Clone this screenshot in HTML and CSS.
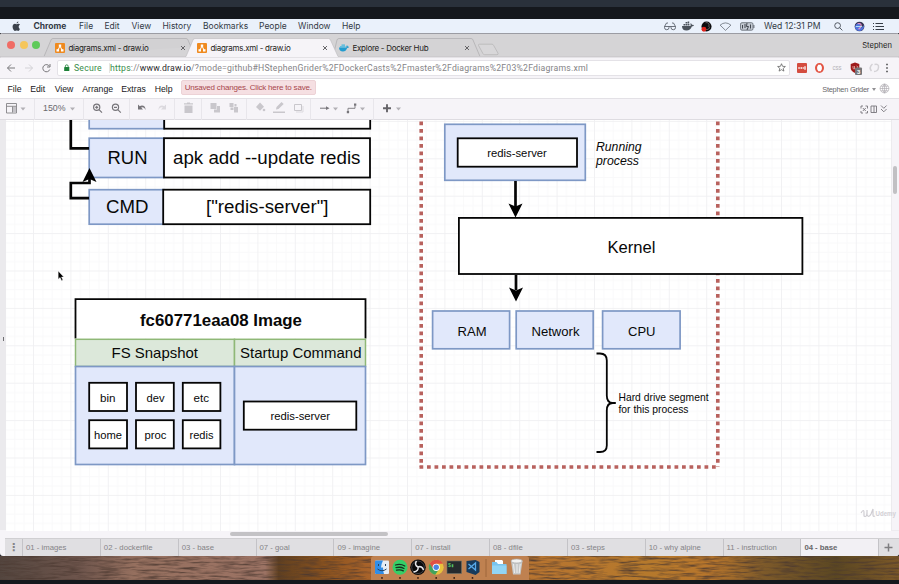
FILE: index.html
```html
<!DOCTYPE html>
<html lang="en">
<head>
<meta charset="utf-8">
<title>diagrams.xml - draw.io</title>
<link rel="stylesheet" href="styles.css">
</head>
<body>
<div class="screen">
  <div class="bezel"></div>
  <header class="menubar">
    <svg class="apple" viewBox="0 0 14 14"><path d="M9.4.6C9.5 1.900 8.400 3.100 7.100 3.100 7 1.900 8.100.8 9.400.6ZM11.300 10.200C10.700 11.600 10 12.700 9.100 12.700 8.300 12.700 8 12.200 7 12.200 6.100 12.200 5.700 12.700 5 12.700 3.700 12.700 2 9.800 2 7.300 2 5 3.500 3.600 5 3.600 5.900 3.600 6.500 4.100 7.200 4.100 7.900 4.100 8.600 3.500 9.700 3.600 10.400 3.600 11 4 11.400 4.600 9.200 5.900 9.300 9.200 11.300 10.200Z"/></svg>
    <nav class="mac-menu"><b>Chrome</b><span>File</span><span>Edit</span><span>View</span><span>History</span><span>Bookmarks</span><span>People</span><span>Window</span><span>Help</span></nav>
    <div class="status">
      <svg class="s-glasses" viewBox="0 0 12 10"><path d="M.5 5.500h4.500v1a2.200 2.200 0 0 1-4.500 0ZM7 5.500h4.500v1a2.200 2.200 0 0 1-4.500 0ZM5 5.500h2M.5 5.500 2.500 2h1.500M11.500 5.500 9.500 2H8" fill="none" stroke="#4b525c" stroke-width=".8"/></svg>
      <svg class="s-docker" viewBox="0 0 12 10"><path d="M0 5h8.500c.3-.8.2-1.500-.2-2.200L9 2.200l1 1.600 2 .2-.6 1-1.600.4C9 8 7 9.500 4.500 9.500 1.500 9.500 0 8 0 5ZM1.500 3h1.700v1.500H1.500ZM3.600 3h1.700v1.500H3.600ZM5.700 3h1.700v1.500H5.700ZM3.600 1h1.700v1.500H3.600ZM5.700.5h1.500v2H5.700Z" fill="#4a515a"/></svg>
      <svg class="s-obs" viewBox="0 0 12 12"><circle cx="6" cy="6" r="5.500" fill="#0c0c0e"/><path d="M5 2C8 1 10 4 8 6M9 6c1 3-3 4.500-5 2" fill="none" stroke="#999" stroke-width=".7"/><circle cx="3.200" cy="9" r="2.600" fill="#e0261e"/></svg>
      <svg class="s-wifi" viewBox="0 0 14 10"><path d="M1 3.500Q7-1.500 13 3.500L7 9.300Z" fill="none" stroke="#5b626b" stroke-width=".8"/></svg>
      <svg class="s-battery" viewBox="0 0 15 9"><rect x=".5" y=".7" width="12.500" height="7.500" rx="1.500" fill="#c3c9d2" stroke="#5c636c" stroke-width=".8"/><path d="M13.900 3v3" stroke="#5c636c"/><path d="M2.500 3v3.500M4 3h2M4 5h2M7 1 6.500 4.500h2L7 8M10.500 2.500v4" stroke="#40464e" fill="none"/></svg>
      <time>Wed 12:31 PM</time>
      <svg class="s-search" viewBox="0 0 10 10"><circle cx="4" cy="4" r="3.200" fill="none" stroke="#444b55"/><path d="m6.300 6.300 3 3" stroke="#444b55"/></svg>
      <svg class="s-siri" viewBox="0 0 12 12"><circle cx="6" cy="6" r="5.300" fill="#353352"/><path d="M1 6C3 1 7 2 7 5s3 2 4-1c.5 5-3 7-5 7C3 11 1 9 1 6Z" fill="#5274dc"/><path d="M4 3c3-1 5 1 3 4L5 9" fill="none" stroke="#e794ca" stroke-width="1.300"/><path d="M2 6h7" stroke="#b7e9f9"/></svg>
      <svg class="s-list" viewBox="0 0 13 9"><path d="M1 1.500h1M1 4.500h1M1 7.500h1M3.500 1.500H11M3.500 4.500H12M3.500 7.500H12" stroke="#353c45" stroke-width="1"/></svg>
    </div>
  </header>

  <div class="browser">
    <div class="tabstrip">
      <div class="lights"><i class="red"></i><i class="amber"></i><i class="green"></i></div>
      <svg class="tab-shapes" viewBox="0 0 899 24"><path d="M44 22.500 51 6q.5-1.500 2-1.500H186q1.500 0 2 1.500l3 7" fill="#d2d1d3" stroke="#b1b0b2" stroke-width=".8"/><path d="M333 22.500 337 6q.5-1.500 2-1.500H471q1.500 0 2 1.500l7 16.500" fill="#d4d3d5" stroke="#b1b0b2" stroke-width=".8"/><path d="M0 22.500H186L193 6q.5-1.500 2-1.500H328.500q1.500 0 2 1.500l7.500 16.500H899V24H0Z" fill="#f6f4f8" stroke="#bcbbbe" stroke-width=".6"/><path d="M479.500 10.200H492q1 0 1.500 1l4.500 8q.5 1.500-1 1.500H484.500q-1 0-1.500-1l-4.500-8.300q-.3-1.200 1-1.200Z" fill="#d8d7d9" stroke="#b7b6b8" stroke-width=".8"/></svg>
      <div class="tab t1"><svg class="fav" viewBox="0 0 10 10"><rect width="10" height="10" rx="1" fill="#ef8a1f"/><path d="M5 3 3 7M5 3l2 4" stroke="#fff"/><path d="M3.800 1.500h2.400v2.200H3.800ZM1.500 6.200h2.500v2.200H1.500ZM6 6.200h2.500v2.200H6Z" fill="#fff"/></svg><span>diagrams.xml - draw.io</span><svg class="x" viewBox="0 0 6 6"><path d="m1 1 4 4m0-4L1 5"/></svg></div>
      <div class="tab t2"><svg class="fav" viewBox="0 0 10 10"><rect width="10" height="10" rx="1" fill="#ef8a1f"/><path d="M5 3 3 7M5 3l2 4" stroke="#fff"/><path d="M3.800 1.500h2.400v2.200H3.800ZM1.500 6.200h2.500v2.200H1.500ZM6 6.200h2.500v2.200H6Z" fill="#fff"/></svg><span>diagrams.xml - draw.io</span><svg class="x" viewBox="0 0 6 6"><path d="m1 1 4 4m0-4L1 5"/></svg></div>
      <div class="tab t3"><svg class="fav" viewBox="0 0 10 10"><path d="M0 4.500h7.500L7.300 3l.8-.8.8 1.300 1.100.2-.5 1-1.300.3C7.300 7.500 6 8.500 4 8.500 1.500 8.500 0 7 0 4.500Z" fill="#239ccf"/><path d="M1 3.800h5.500M2.500 2.200H6" stroke="#43b8df" stroke-width="1.300"/></svg><span>Explore - Docker Hub</span><svg class="x" viewBox="0 0 6 6"><path d="m1 1 4 4m0-4L1 5"/></svg></div>
      <span class="profile">Stephen</span>
    </div>

    <div class="addressbar">
      <svg class="nav-icons" viewBox="0 0 52 14"><path d="M9 7H1.500M5 3.500 1.500 7 5 10.500" fill="none" stroke="#79787b" stroke-width="1"/><path d="M19 7h7.500M23 3.500 26.500 7 23 10.500" fill="none" stroke="#d3d2d6" stroke-width="1"/><path d="M43.500 5.300A3.600 3.600 0 1 0 43.800 8.500M44 3v3h-3" fill="none" stroke="#79787b" stroke-width="1"/></svg>
      <div class="omnibox">
        <svg class="lock" viewBox="0 0 6 8"><path d="M1.500 3.500V2.300a1.500 1.500 0 0 1 3 0v1.200" fill="none" stroke="#1d8138" stroke-width=".9"/><rect x=".2" y="3.200" width="5.600" height="4.600" rx=".4" fill="#1d8138"/></svg>
        <span class="secure">Secure</span><span class="url"><span class="scheme">https</span>://<span class="host">www.draw.io</span>/?mode=github#HStephenGrider%2FDockerCasts%2Fmaster%2Fdiagrams%2F03%2Fdiagrams.xml</span>
        <svg class="star" viewBox="0 0 10 10"><path d="m5 .8 1.200 2.900 3.100.2L6.900 6l.8 3L5 7.400 2.300 9l.8-3L.7 3.900l3.100-.2Z" fill="none" stroke="#555" stroke-width=".8"/></svg>
      </div>
      <svg class="extensions" viewBox="0 0 100 16"><rect x="2" y="3" width="10" height="10" rx="1" fill="#d44c3f"/><path d="M3.300 8h1.500M5.500 8H7M7.600 8h1.200M10 6.300v3.400" stroke="#fff" stroke-width="1.300"/><ellipse cx="24.500" cy="8" rx="3.500" ry="3.900" fill="none" stroke="#e35342" stroke-width="2"/><path d="M24.500 4.800v6.400" stroke="#fff" stroke-width="2.800"/><text x="37.500" y="10.200" textLength="9" lengthAdjust="spacingAndGlyphs">css</text><path d="m60 2.500 4.300 1.400v4.200q0 3.200-4.300 5-4.300-1.800-4.300-5V3.900Z" fill="#9e1b1b"/><path d="M58 6v2q0 1.200 1.500 1V6M61.500 6q2 0 1 2.500" stroke="#e8b0a9" fill="none" stroke-width=".8"/><rect x="60" y="7.500" width="7" height="7.500" rx="1" fill="#767577"/><text class="count" x="61.900" y="13.500">3</text><path d="M76.500 11q-3-3.500 1-7M79 11.500q4 0 4.500-4t-4-3" fill="none" stroke="#d4d2d6" stroke-width="1.500"/><path d="M91.200 4.500h1.600M91.200 8h1.600M91.200 11.500h1.600" stroke="#4c4b4d" stroke-width="1.600"/></svg>
    </div>

    <div class="appmenu">
      <nav><span>File</span><span>Edit</span><span>View</span><span>Arrange</span><span>Extras</span><span>Help</span></nav>
      <div class="unsaved">Unsaved changes. Click here to save.</div>
      <span class="user">Stephen Grider</span><i class="caret"></i>
      <svg class="globe" viewBox="0 0 12 12"><circle cx="6" cy="6" r="4.800"/><path d="M1 6h10M2 3.500h8M2 8.500h8M6 1v10M6 1Q1.500 6 6 11M6 1q4.500 5 0 10"/></svg>
    </div>

    <div class="toolbar">
      <svg viewBox="0 0 899 21">
        <path d="M34.500 0v21M83.500 0v21M129.500 0v21M174.500 0v21M201.500 0v21M246.500 0v21M310.500 0v21M373.500 0v21" stroke="#e8e6eb"/>
        <g fill="none" stroke="#858387" stroke-width=".9"><path d="M6.500 4.500h10v9.500h-10ZM6.500 7.300h10M12.500 7.500v6"/><path d="M13 10.700h3" stroke-width="5.500" stroke="#c5c3c8"/></g>
        <g fill="#b2b0b5"><path d="M20.500 8.500h5l-2.500 3ZM70 8.500h5l-2.500 3ZM333 8.500h5l-2.500 3ZM360 8.500h5l-2.500 3ZM396 8.500h5l-2.500 3Z"/></g>
        <text x="43" y="12.300" textLength="22.500" lengthAdjust="spacingAndGlyphs">150%</text>
        <g fill="none" stroke="#77757a" stroke-width="1.200"><circle cx="96.700" cy="8.300" r="3.100"/><path d="m99 10.600 3 3M95.200 8.300h3M96.700 6.800v3"/><circle cx="115.500" cy="8.300" r="3.100"/><path d="m117.800 10.600 3 3M114 8.300h3"/></g>
        <path d="M138 5.500v5h5l-1.900-1.900q3-1.500 4.500 2.300Q145.300 6.500 142 6.500q-1.300 0-2.200.8Z" fill="#77757a"/>
        <path d="M166 5.500v5h-5l1.900-1.900q-3-1.500-4.500 2.300Q158.700 6.500 162 6.500q1.300 0 2.200.8Z" fill="#dbd9de"/>
        <g fill="#c9c7cc"><path d="M184.500 6.500h8v7.500h-8ZM184 4.300h9v1.300h-9ZM187 3.500h3v1h-3Z"/><path d="M210.500 4h6v6h-6ZM217 7h3v6.500h-6v-3h3ZM229.500 4h4v4h-4ZM234 8h4v5.500h-4ZM230.500 8.500h3v2.500h-3ZM234.500 5h2v2.500h-2Z"/><path d="m256 8 4-4.500 4 4.300-4 4Z"/><circle cx="264" cy="11" r="1.300"/><path d="m276 10.500.5-2.500 5-5 2.200 2-5.200 5ZM273 12.600h12v1.300h-12Z"/></g>
        <path d="M294.500 5.500h7v6h-7Z" fill="none" stroke="#c9c7cc"/><path d="M296 13h7V7" fill="none" stroke="#dcdadf"/>
        <path d="M320 9.200h7" stroke="#77757a"/><path d="m326 7.300 3.500 1.900-3.500 1.900Z" fill="#77757a"/>
        <path d="M348 13V9.300h7V6.500" fill="none" stroke="#858388"/><path d="M346.800 12h2.300v2.300h-2.300ZM354 4.500h2.300v2.300H354Z" fill="#77757a"/>
        <path d="M383 9.200h8M387 5.200v8" stroke="#656368" stroke-width="1.900"/>
        <g fill="none" stroke="#77757a" stroke-width=".9"><path d="M861 9.500V7h2M865.500 7h2v2.500M867.500 12v2h-2M863 14h-2v-2M862.800 9l3 3M865.800 9l-3 3M871 7h5.500v6.500H871ZM874 7v6.500M881 6.500l2.800 2.800 2.800-2.800M881 10l2.800 2.800 2.800-2.800"/></g>
      </svg>
    </div>

    <main class="workspace">
      <aside class="panel-edge"><i></i></aside>
      <svg class="canvas" viewBox="6 120 885 411">
        <defs>
          <pattern id="grid" x="-4.400" y="120.900" width="37.400" height="37.400" patternUnits="userSpaceOnUse"><path d="M9.850 0v37.400M19.200 0v37.400M28.550 0v37.400M0 9.850h37.400M0 19.200h37.400M0 28.550h37.400" stroke="#f8f8f9" stroke-width=".9"/><path d="M.5 0v37.400M0 .5h37.400" stroke="#f0f0f2" stroke-width=".9"/></pattern>
        </defs>
        <rect class="sheet" x="6" y="120" width="885" height="411"/><rect x="6" y="120" width="885" height="411" fill="url(#grid)"/>
        <g class="boundary"><path d="M421.200 121.500V467M717.800 121.500V467"/><path d="M419.500 467H719.500"/></g>
        <g class="blue">
          <rect x="89.200" y="100" width="75" height="28.700"/><rect x="89.200" y="138.200" width="74.500" height="39.300"/><rect x="89.200" y="189.700" width="74.500" height="34.500"/>
          <rect x="444.800" y="124.300" width="140.500" height="56"/>
          <rect x="432.600" y="311" width="77" height="37.800"/><rect x="516.200" y="311" width="77" height="37.800"/><rect x="602.600" y="311" width="77.500" height="37.800"/>
        </g>
        <g class="black">
          <rect x="164.200" y="100" width="206" height="28.700"/><rect x="164" y="138.200" width="206" height="39.300"/><rect x="163.200" y="189.700" width="207" height="34.500"/>
          <rect x="457.700" y="138.300" width="119.300" height="28.400"/><rect x="458.900" y="217.900" width="343.500" height="56.100"/>
        </g>
        <path class="header-box" d="M75.500 338.600V299.200h290v39.400"/>
        <g class="green"><rect x="75.500" y="339.300" width="159" height="27.200"/><rect x="234.500" y="339.300" width="131" height="27.200"/></g>
        <g class="blue"><rect x="75.500" y="366.500" width="159" height="98"/><rect x="234.500" y="366.500" width="131" height="98"/></g>
        <g class="black">
          <rect x="89.200" y="382.800" width="37.800" height="28.200"/><rect x="136" y="382.800" width="37.800" height="28.200"/><rect x="182.800" y="382.800" width="37.600" height="28.200"/>
          <rect x="89.200" y="420.200" width="37.800" height="28.200"/><rect x="136" y="420.200" width="37.800" height="28.200"/><rect x="182.800" y="420.200" width="37.600" height="28.200"/>
          <rect x="243.800" y="401.500" width="112.500" height="28.200"/>
        </g>
        <g class="wire"><path d="M70.800 118v30.400H89"/><path d="M89 198.100H70.800V183H89.500V178"/><path d="M515.500 181v26"/><path d="M516 275v15"/></g>
        <path d="m89.500 168 7 14-7-3-7 3ZM515.500 217.500l-7-14 7 3 7-3ZM516 301.500l-7-14 7 3 7-3Z"/>
        <path class="brace" d="M596.500 353.500h3.500q6.800 0 6.800 7v35q0 7.500 6 7.500h3h-3q-6 0-6 7.500v35q0 6.500-6.800 6.500h-3.500"/>
        <g class="labels">
          <text class="xl" x="107.500" y="164.300" textLength="40" lengthAdjust="spacingAndGlyphs">RUN</text>
          <text class="xl" x="173" y="164.300" textLength="187.500" lengthAdjust="spacingAndGlyphs">apk add --update redis</text>
          <text class="xl" x="106" y="213.300" textLength="42.500" lengthAdjust="spacingAndGlyphs">CMD</text>
          <text class="xl" x="206" y="213.300" textLength="122.500" lengthAdjust="spacingAndGlyphs">["redis-server"]</text>
          <text class="title" x="140" y="326.300" textLength="162" lengthAdjust="spacingAndGlyphs">fc60771eaa08 Image</text>
          <text class="lg" x="111.500" y="358.200" textLength="86.500" lengthAdjust="spacingAndGlyphs">FS Snapshot</text>
          <text class="lg" x="240" y="358.200" textLength="121.500" lengthAdjust="spacingAndGlyphs">Startup Command</text>
          <text x="100" y="401.600" textLength="15.500" lengthAdjust="spacingAndGlyphs">bin</text><text x="146.500" y="401.600" textLength="18" lengthAdjust="spacingAndGlyphs">dev</text><text x="193.500" y="401.600" textLength="15.500" lengthAdjust="spacingAndGlyphs">etc</text>
          <text x="94" y="439" textLength="28" lengthAdjust="spacingAndGlyphs">home</text><text x="144.500" y="439" textLength="22" lengthAdjust="spacingAndGlyphs">proc</text><text x="189.500" y="439" textLength="24" lengthAdjust="spacingAndGlyphs">redis</text>
          <text x="270.500" y="420.300" textLength="59.500" lengthAdjust="spacingAndGlyphs">redis-server</text>
          <text x="487.300" y="157" textLength="59.500" lengthAdjust="spacingAndGlyphs">redis-server</text>
          <text class="it" x="596" y="150.700" textLength="45.500" lengthAdjust="spacingAndGlyphs">Running</text><text class="it" x="596" y="164.700" textLength="43" lengthAdjust="spacingAndGlyphs">process</text>
          <text class="kernel" x="607.500" y="252.500" textLength="48" lengthAdjust="spacingAndGlyphs">Kernel</text>
          <text class="md" x="457.500" y="335.500" textLength="29" lengthAdjust="spacingAndGlyphs">RAM</text><text class="md" x="531.500" y="335.500" textLength="48" lengthAdjust="spacingAndGlyphs">Network</text><text class="md" x="628" y="335.500" textLength="27.500" lengthAdjust="spacingAndGlyphs">CPU</text>
          <text class="sm" x="618.500" y="401.300" textLength="90" lengthAdjust="spacingAndGlyphs">Hard drive segment</text><text class="sm" x="618.500" y="413.200" textLength="70" lengthAdjust="spacingAndGlyphs">for this process</text>
        </g>
        <path d="M58.200 271v8.200l1.900-1.700 1.500 3.200 1.300-.6-1.400-3.100h2.300Z" stroke="#fff" stroke-width=".4"/>
      </svg>
      <div class="vscroll"><i></i></div>
      <svg class="watermark" viewBox="0 0 38 14"><path d="M1 6q3-5 3 0v3q3 2 3-4V3M7 5v3q2 3 4-1l2-5v6q0 2 2 1"/><text x="15.500" y="9.300" textLength="20.500" lengthAdjust="spacingAndGlyphs">Udemy</text></svg>
    </main>
    <div class="hscroll"><i></i></div>
    <footer class="pages"><span class="dots">⋮</span><span>01 - images</span><span>02 - dockerfile</span><span>03 - base</span><span>07 - goal</span><span>09 - imagine</span><span>07 - install</span><span>08 - dfile</span><span>03 - steps</span><span>10 - why alpine</span><span>11 - instruction</span><span class="active">04 - base</span><svg class="add" viewBox="0 0 18 18"><path d="M5.500 8.500h8M9.500 4.500v8" stroke="#7e7d80" stroke-width="1.500"/></svg></footer>
  </div>

  <div class="desktop">
    <svg class="ripples" viewBox="0 0 899 24" preserveAspectRatio="none"><defs><filter id="water" x="0" y="0" width="100%" height="100%"><feTurbulence type="fractalNoise" baseFrequency=".05 .5" numOctaves="3" seed="8"/><feColorMatrix values="0 0 0 0 .07  0 0 0 0 .04  0 0 0 0 .03  2.200 0 0 0 -.9"/></filter></defs><rect width="899" height="24" filter="url(#water)"/></svg>
    <div class="dock">
      <svg viewBox="0 0 158 24">
        <rect x="4" y="4.500" width="14" height="13.500" rx="1" fill="#e5edf5"/><path d="M5 4.500h7q-2 4-2 7h2q0 4 1 6.500H5q-1 0-1-1v-11.500q0-1 1-1Z" fill="#2f8ee8"/><path d="M7.500 8v2M14.500 8v2M6.500 13q4.500 3.500 9 0" fill="none" stroke="#24415f"/>
        <circle cx="29" cy="11.300" r="7.500" fill="#35cf67"/><path d="M24.500 9q5-1.500 9.300 1M25 11.700q4.500-1.200 8 .8M25.500 14.200q4-1 6.800.7" fill="none" stroke="#17301e" stroke-width="1.300" stroke-linecap="round"/>
        <circle cx="47" cy="11.300" r="7.800" fill="#09090b"/><circle cx="47" cy="11.300" r="6.300" fill="none" stroke="#77777b" stroke-width=".5"/><path d="M47 11q-4-2-1.500-6M47 11q4-1.500 5.500 3M47 11q1 4-4.500 5" fill="none" stroke="#e5e5e8" stroke-width="1.500"/>
        <circle cx="65.200" cy="11.300" r="7.500" fill="#e7c23c"/><path d="M58.700 7.500a7.500 7.500 0 0 1 13.200.3H65.200L61.700 13Z" fill="#df5043"/><path d="M58.700 7.500a7.500 7.500 0 0 0 5.500 11.200L68.200 13 62.200 13Z" fill="#42a35b"/><circle cx="65.200" cy="11.300" r="3.600" fill="#fff"/><circle cx="65.200" cy="11.300" r="2.700" fill="#4c83df"/>
        <rect x="76" y="5" width="14.500" height="12.500" fill="#252a2e" stroke="#687069" stroke-width=".6"/><text x="77" y="11">$▮</text>
        <path d="m95.500 5 9-1 4 2v10l-4 3-9-3Z" fill="#173a5b"/><path d="m97.500 8 7 6V7l-7 6" fill="none" stroke="#58a9e9" stroke-width="1.300"/>
        <path d="M115 3v18" stroke="#985f35" stroke-width=".8"/>
        <path d="M124 4h7l1 1v4h-8Z" fill="#fff"/><path d="M121 6h4.500l1.500 2H135.500v10H121Z" fill="#78c4ed"/><path d="M121 9.500h14.500V18H121Z" fill="#92d5f4"/>
        <path d="m140 5 2 13.500h7.500l2-13.500Z" fill="#c6c8c8"/><ellipse cx="145.700" cy="5" rx="5.700" ry="2" fill="#f2f2f1" stroke="#aaa" stroke-width=".7"/><path d="m142.500 8 1 9M146 8v9M149.200 8l-1 9" stroke="#eee"/>
        <g fill="#30190f"><circle cx="11" cy="21.900" r=".9"/><circle cx="29" cy="21.900" r=".9"/><circle cx="47" cy="21.900" r=".9"/><circle cx="65.200" cy="21.900" r=".9"/><circle cx="83.200" cy="21.900" r=".9"/><circle cx="101.500" cy="21.900" r=".9"/></g>
      </svg>
    </div>
  </div>
  <div class="bottom-bezel"></div>
</div>
</body>
</html>
```
FILE: styles.css
```css
* { box-sizing: border-box; }
body { margin: 0; background: #15181d; font-family: "Liberation Sans", Arial, sans-serif; overflow: hidden; }
svg { display: block; flex: none; }
.screen { width: 899px; height: 584px; display: flex; flex-direction: column; }
.bezel { height: 19px; flex: none; background: linear-gradient(#2a313b 7px, #15181d 7px); }

.menubar { height: 14px; flex: none; display: flex; align-items: center; background: #eaf1fb; color: #333a45; font: 8.5px/14px Inter, sans-serif; }
.apple { width: 11px; height: 11px; margin-left: 11px; fill: #3b414b; }
.mac-menu { display: grid; grid-template-columns: 45.500px 25.500px 27px 31px 40.500px 56px 39px 44px 30px; margin-left: 11.500px; white-space: nowrap; }
.mac-menu b { font-weight: 700; }
.status { flex: 1; display: flex; align-items: center; justify-content: flex-end; padding-right: 14px; }
.s-glasses { width: 12px; height: 10px; margin-right: 6px; }
.s-docker { width: 12px; height: 10px; margin-right: 7px; }
.s-obs { width: 11px; height: 11px; margin-right: 7px; }
.s-wifi { width: 13px; height: 9px; margin-right: 8px; }
.s-battery { width: 15px; height: 9px; margin-right: 9px; }
.status time { width: 57px; margin-right: 13px; white-space: nowrap; font-size: 8.600px; }
.s-search { width: 9px; height: 9px; margin-right: 11px; }
.s-siri { width: 11px; height: 11px; margin-right: 7px; }
.s-list { width: 13px; height: 9px; }

.browser { height: 523px; flex: none; display: flex; flex-direction: column; background: #f6f4f8; border-radius: 3px; overflow: hidden; }
.tabstrip { position: relative; height: 24px; flex: none; display: flex; align-items: center; background: #d5d4d6; border-top: 1px solid #9b9ca3; font: 8px/12px Inter, sans-serif; color: #1e1d20; padding: 0 7px; }
.tab-shapes { position: absolute; left: 0; top: 0; width: 899px; height: 24px; }
.lights { display: flex; gap: 4.500px; width: 47.500px; margin-top: -1px; }
.lights i { width: 8px; height: 8px; border-radius: 50%; }
.red { background: #f06c65; } .amber { background: #f5c65c; } .green { background: #5fca5a; }
.tab { position: relative; display: flex; align-items: center; width: 142px; padding-top: 4px; }
.fav { width: 10px; height: 10px; margin-right: 4px; }
.tab span { flex: 1; white-space: nowrap; letter-spacing: -.28px; font-size: 8px; }
.x { width: 6px; height: 6px; margin-right: 11px; stroke: #58575a; stroke-width: .9; }
.profile { position: relative; margin-left: auto; font-size: 7.600px; }

.addressbar { height: 22px; flex: none; display: flex; align-items: center; border-bottom: 1px solid #dddce0; }
.nav-icons { width: 52px; height: 14px; margin-left: 6px; }
.omnibox { width: 733px; height: 16px; border: 1px solid #e4e2e7; border-radius: 2px; background: #fff; display: flex; align-items: center; margin-left: -1px; padding: 0 3px 0 6px; font: 8.7px/14px Roboto, sans-serif; letter-spacing: .2px; color: #858487; white-space: nowrap; }
.lock { width: 5.500px; height: 7.500px; margin-right: 4.500px; }
.secure { color: #3a8d4b; width: 36px; border-right: 1px solid #e5e5e5; line-height: 10px; }
.url { flex: 1; }
.scheme { color: #3a8d4b; } .host { color: #29282b; }
.star { width: 9px; height: 9px; }
.extensions { width: 100px; height: 16px; margin-left: 5px; }
.extensions text { font: 6.5px "Liberation Sans", sans-serif; fill: #b5b3b8; }
.extensions .count { fill: #fff; font-size: 6px; font-weight: bold; }

.appmenu { height: 19px; flex: none; background: #fff; display: flex; align-items: center; padding-right: 9px; color: #18171a; font-size: 8.700px; }
.appmenu nav { display: grid; grid-template-columns: 22.700px 24.500px 27.500px 39px 33.500px 26px; padding-left: 7.500px; white-space: nowrap; }
.unsaved { width: 135px; height: 15px; margin-top: -2px; background: #f5dfe2; border: 1px solid #ecd2d6; border-radius: 2px; color: #a8464c; font: 8px/13px "Liberation Sans", sans-serif; letter-spacing: -.2px; text-align: center; white-space: nowrap; }
.user { margin-left: auto; color: #69686b; font-size: 7.400px; letter-spacing: -.24px; padding-top: 2px; }
.caret { border: 2.500px solid transparent; border-top: 3px solid #929194; border-bottom: 0; margin: 1px 3px 0 3px; }
.globe { width: 11px; height: 11px; fill: none; stroke: #aaa8ad; stroke-width: .7; }
.toolbar { height: 22px; flex: none; border-top: 1px solid #e3e1e6; border-bottom: 1px solid #dedce1; background: #f6f4f8; }
.toolbar svg { width: 899px; height: 21px; }
.toolbar text { font: 8.500px "Liberation Sans", sans-serif; fill: #6b696e; }

.workspace { position: relative; height: 410px; flex: none; display: flex; }
.panel-edge { width: 6px; background: #ebeaed; display: flex; align-items: center; padding-left: 2.500px; }
.panel-edge i { width: 1.500px; height: 4px; background: #6f6e71; margin-top: 27px; }
.canvas { width: 885px; height: 411px; }
.sheet { fill: #fff; }
.vscroll { width: 8px; height: 410px; background: #f6f4f8; border-left: 1px solid #ecebee; padding: 46px 0 0 1px; }
.vscroll i { display: block; width: 4px; height: 28px; border-radius: 2px; background: #c1c0c3; }
.blue rect { fill: #e1e8fb; stroke: #7e98c5; stroke-width: 1.700; }
.black rect, .header-box { fill: #fff; stroke: #050505; stroke-width: 1.800; }
.green rect { fill: #dce8da; stroke: #8fb877; stroke-width: 1.500; }
.boundary path { fill: none; stroke: #b8615d; stroke-width: 3.600; stroke-dasharray: 3.750 3.750; }
.wire path { fill: none; stroke: #050505; stroke-width: 2.700; }
.brace { fill: none; stroke: #050505; stroke-width: 1.800; }
.labels text { font: 11.200px "Liberation Sans", sans-serif; fill: #080808; }
.labels .xl { font-size: 18.700px; }
.labels .title { font-size: 16.800px; font-weight: bold; }
.labels .lg { font-size: 15px; }
.labels .kernel { font-size: 16.800px; }
.labels .md { font-size: 13px; }
.labels .sm { font-size: 10.300px; }
.labels .it { font-size: 12.200px; font-style: italic; }
.watermark { position: absolute; right: 1px; bottom: 9px; width: 38px; height: 14px; }
.watermark path { fill: none; stroke: #cfcdd2; stroke-width: 1.200; }
.watermark text { font: bold 7px "Liberation Sans", sans-serif; fill: #d2d0d5; }
.hscroll { height: 8px; flex: none; margin-left: 6px; padding: 1px 0 0 224px; background: #f6f4f8; border-top: 1px solid #eeecf0; }
.hscroll i { display: block; width: 158px; height: 4px; border-radius: 2px; background: #c3c2c5; }

.pages { height: 18px; flex: none; margin-left: 5px; display: grid; grid-template-columns: 18px repeat(11, 77.850px) 18px; background: #e0dfe2; border-top: 1px solid #d0cfd2; color: #858487; font: 7.750px/18px "Liberation Sans", sans-serif; white-space: nowrap; }
.pages span { border-right: 1px solid #c4c3c7; padding-left: 3px; }
.pages .dots { text-align: center; padding: 0; font: bold 11px/18px "DejaVu Sans", sans-serif; }
.pages .active { background: #f2f0f4; color: #68676a; font-weight: bold; letter-spacing: -.05px; }
.add { width: 18px; height: 18px; }
.desktop { position: relative; height: 24px; flex: none; display: flex; justify-content: center; background: linear-gradient(90deg, #54463f, #6e554c 9%, #96705f 15%, #9c7364 29.500%, #604020 31%, #8a521e 36%, #a8632a 41%, #b87530 60%, #b5792c 72%, #b8762c 79%, #7d5a2a 85%, #5b4722 93%, #7b5828); }
.ripples { position: absolute; inset: 0; width: 899px; height: 24px; opacity: .85; }
.dock { position: relative; width: 158px; height: 24px; border-radius: 3px 3px 0 0; background: #bf8150; }
.dock svg { width: 158px; height: 24px; }
.dock text { font: bold 5px "Liberation Mono", monospace; fill: #55c568; }
.bottom-bezel { height: 4px; flex: none; background: #15181d; }
```
